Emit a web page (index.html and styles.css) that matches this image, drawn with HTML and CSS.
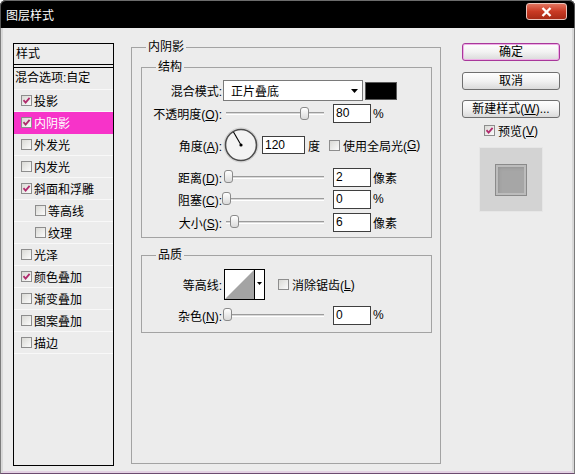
FILE: index.html
```html
<!DOCTYPE html>
<html lang="zh-CN">
<head>
<meta charset="utf-8">
<title>图层样式</title>
<link rel="stylesheet" href="styles.css">
</head>
<body>
<div class="window">
  <div class="titlebar">
    <span class="title">图层样式</span>
    <span class="close"><svg width="11" height="10" viewBox="0 0 11 10"><path d="M1.5 1 L9.5 9 M9.5 1 L1.5 9" stroke="#fff" stroke-width="2.4"/></svg></span>
  </div>
  <div class="client">
    <div class="stylelist">
      <div class="list-head">样式</div>
      <div class="list-blend">混合选项:自定</div>
      <div class="item"><span class="cb"><svg viewBox="0 0 9 9"><path d="M1.5 4.2 L3.6 6.6 L7.6 1.8"/></svg></span>投影</div>
      <div class="item sel"><span class="cb"><svg viewBox="0 0 9 9"><path d="M1.5 4.2 L3.6 6.6 L7.6 1.8"/></svg></span>内阴影</div>
      <div class="item"><span class="cb"></span>外发光</div>
      <div class="item"><span class="cb"></span>内发光</div>
      <div class="item"><span class="cb"><svg viewBox="0 0 9 9"><path d="M1.5 4.2 L3.6 6.6 L7.6 1.8"/></svg></span>斜面和浮雕</div>
      <div class="item sub"><span class="cb"></span>等高线</div>
      <div class="item sub"><span class="cb"></span>纹理</div>
      <div class="item"><span class="cb"></span>光泽</div>
      <div class="item"><span class="cb"><svg viewBox="0 0 9 9"><path d="M1.5 4.2 L3.6 6.6 L7.6 1.8"/></svg></span>颜色叠加</div>
      <div class="item"><span class="cb"></span>渐变叠加</div>
      <div class="item"><span class="cb"></span>图案叠加</div>
      <div class="item"><span class="cb"></span>描边</div>
    </div>

    <fieldset class="group outer">
      <legend>内阴影</legend>
      <div class="outer-body">
        <fieldset class="group inner struct">
          <legend>结构</legend>
          <div class="row r-blend">
            <span class="lbl">混合模式:</span>
            <div class="select"><span>正片叠底</span><svg width="7" height="4" viewBox="0 0 7 4"><path d="M0 0H7L3.5 4Z"/></svg></div>
            <span class="swatch"></span>
          </div>
          <div class="row r-opacity">
            <span class="lbl">不透明度(<u>O</u>):</span>
            <div class="slider"><span class="track"></span><span class="thumb" style="left:78px"></span></div>
            <span class="num">80</span><span class="unit">%</span>
          </div>
          <div class="row r-angle">
            <span class="lbl">角度(<u>A</u>):</span>
            <svg class="dial" width="36" height="36" viewBox="0 0 36 36">
              <circle cx="18" cy="18" r="17" fill="none" stroke="#cfcfcf" stroke-width="1"/>
              <circle cx="18" cy="18" r="15.5" fill="#f3f3f3" stroke="#4d4d4d" stroke-width="1.6"/>
              <line x1="18" y1="18" x2="10.5" y2="5" stroke="#000" stroke-width="1.1"/>
              <circle cx="18" cy="18" r="1.6" fill="#000"/>
            </svg>
            <span class="num wide">120</span><span class="unit deg">度</span>
            <span class="check global"><span class="cb"></span>使用全局光(<u>G</u>)</span>
          </div>
          <div class="row r-dist">
            <span class="lbl">距离(<u>D</u>):</span>
            <div class="slider"><span class="track"></span><span class="thumb" style="left:2px"></span></div>
            <span class="num">2</span><span class="unit">像素</span>
          </div>
          <div class="row r-choke">
            <span class="lbl">阻塞(<u>C</u>):</span>
            <div class="slider"><span class="track"></span><span class="thumb" style="left:0px"></span></div>
            <span class="num">0</span><span class="unit">%</span>
          </div>
          <div class="row r-size">
            <span class="lbl">大小(<u>S</u>):</span>
            <div class="slider"><span class="track"></span><span class="thumb" style="left:8px"></span></div>
            <span class="num">6</span><span class="unit">像素</span>
          </div>
        </fieldset>

        <fieldset class="group inner quality">
          <legend>品质</legend>
          <div class="row r-contour">
            <span class="lbl">等高线:</span>
            <div class="contour">
              <svg class="curve" width="29" height="29" viewBox="0 0 29 29"><rect width="29" height="29" fill="#fff"/><path d="M0 29 L29 0 L29 29 Z" fill="#a4a4a4"/></svg>
              <span class="carrow"><svg width="5" height="3" viewBox="0 0 5 3"><path d="M0 0H5L2.5 3Z"/></svg></span>
            </div>
            <span class="check anti"><span class="cb"></span>消除锯齿(<u>L</u>)</span>
          </div>
          <div class="row r-noise">
            <span class="lbl">杂色(<u>N</u>):</span>
            <div class="slider"><span class="track"></span><span class="thumb" style="left:1px"></span></div>
            <span class="num">0</span><span class="unit">%</span>
          </div>
        </fieldset>
      </div>
    </fieldset>

    <div class="side">
      <div class="btn default">确定</div>
      <div class="btn cancel">取消</div>
      <div class="btn newstyle">新建样式(<u>W</u>)...</div>
      <div class="preview-row"><span class="cb"><svg viewBox="0 0 9 9"><path d="M1.5 4.2 L3.6 6.6 L7.6 1.8"/></svg></span>预览(<u>V</u>)</div>
      <div class="preview"><span class="pv-square"></span></div>
    </div>
  </div>
</div>
</body>
</html>
```
FILE: styles.css
```css
html, body {
  margin: 0;
  padding: 0;
  background: #ffffff;
}

body {
  font-family: "Liberation Sans", "Noto Sans CJK SC", sans-serif;
  font-size: 12px;
  color: #000;
}

.window {
  width: 575px;
  height: 474px;
  display: flex;
  flex-direction: column;
}

/* title bar */
.titlebar {
  height: 28px;
  flex: none;
  display: flex;
  align-items: flex-start;
  background: #000;
  border-radius: 6px 6px 0 0;
  box-shadow: inset 0 1px #6c6c6c, inset 1px 0 #555, inset -1px 0 #555;
  color: #fff;
}

.title {
  padding: 8px 0 0 6px;
  line-height: 16px;
  font-size: 12px;
}

.close {
  margin: 3px 8px 0 auto;
  width: 41px;
  height: 17px;
  box-sizing: border-box;
  border: 1px solid #e9c3bb;
  border-radius: 3px;
  background: linear-gradient(#e2735e, #c93a24 50%, #a82a16);
  display: flex;
  align-items: center;
  justify-content: center;
}

/* client area */
.client {
  flex: 1;
  display: flex;
  background: #ececec;
  border: 1px solid #7c7c7c;
  border-top: 0;
  border-bottom-color: #6c4c70;
  box-shadow: inset 2px 0 #d8d8d8, inset -2px 0 #d8d8d8, inset 0 -2px #e4d2e4;
  padding: 12px 0 7px 12px;
}

/* style list */
.stylelist {
  width: 101px;
  margin-top: 3px;
  box-sizing: border-box;
  border: 1px solid #000;
  flex: none;
}

.list-head {
  height: 20px;
  line-height: 20px;
  padding-left: 2px;
  border-bottom: 1px solid #000;
}

.list-blend {
  margin-top: 2px;
  border-top: 1px solid #000;
  height: 21px;
  line-height: 21px;
  padding-left: 1px;
  border-bottom: 1px solid #f8f8f8;
}

.item {
  height: 21px;
  display: flex;
  align-items: center;
  padding-left: 7px;
  border-bottom: 1px solid #f8f8f8;
  white-space: nowrap;
}

.item.sub {
  padding-left: 21px;
}

.item.sel {
  background: #f733c9;
  border-bottom-color: #f733c9;
  color: #fff;
}

.item .cb {
  margin-right: 2px;
}

/* checkbox */
.cb {
  width: 11px;
  height: 11px;
  box-sizing: border-box;
  border: 1px solid #8d8d8d;
  background: linear-gradient(135deg, #d9d9d5, #fbfbfb);
  display: inline-flex;
  align-items: center;
  justify-content: center;
  flex: none;
}

.cb svg {
  width: 9px;
  height: 9px;
}

.cb svg path {
  fill: none;
  stroke: #b02a6c;
  stroke-width: 1.8;
}

/* group boxes */
.group {
  margin: 0;
  padding: 0;
  border: 1px solid #a3a3a3;
  min-width: 0;
  box-sizing: border-box;
}

.group > legend {
  margin-left: 14px;
  padding: 0 2px;
  line-height: 14px;
  font-size: 12px;
}

.group.outer {
  width: 310px;
  margin: 0 0 2px 17px;
  flex: none;
}

.outer-body {
  padding: 6px 8px 0 9px;
}

.group.inner {
  width: 291px;
}

.struct {
  padding-bottom: 4px;
}

.quality {
  margin-top: 10px;
  padding-bottom: 6px;
}

/* rows */
.row {
  display: flex;
  align-items: center;
  white-space: nowrap;
}

.lbl {
  width: 80px;
  flex: none;
  text-align: right;
}

.r-blend { margin-top: 6px; height: 21px; }
.r-opacity { margin-top: 2px; height: 21px; }
.r-angle { margin-top: 3px; height: 36px; }
.r-dist { margin-top: 3px; height: 22px; }
.r-choke { height: 22px; }
.r-size { margin-top: 1px; height: 22px; }
.r-contour { margin-top: 7px; height: 31px; }
.r-noise { margin-top: 4px; height: 22px; }

/* select */
.select {
  margin-left: 1px;
  width: 140px;
  height: 21px;
  box-sizing: border-box;
  border: 1px solid #7a7a7a;
  background: #fff;
  display: flex;
  align-items: center;
  padding: 0 4px 0 7px;
}

.select span {
  flex: 1;
}

.swatch {
  margin-left: 2px;
  width: 32px;
  height: 18px;
  box-sizing: border-box;
  background: #000;
  border: 1px solid #5a5a5a;
}

/* slider */
.slider {
  position: relative;
  width: 111px;
  height: 14px;
  flex: none;
  display: flex;
  align-items: center;
  padding-left: 4px;
  box-sizing: border-box;
}

.track {
  width: 98px;
  height: 3px;
  box-sizing: border-box;
  border-top: 1px solid #9c9c9c;
  border-bottom: 1px solid #ffffff;
  background: #d9d9d9;
}

.thumb {
  position: absolute;
  top: 0;
  width: 9px;
  height: 13px;
  box-sizing: border-box;
  border: 1px solid #8a8a8a;
  border-radius: 3px;
  background: linear-gradient(#ffffff, #dadada);
}

/* number fields */
.num {
  width: 38px;
  height: 19px;
  box-sizing: border-box;
  border: 1px solid #3f3f3f;
  background: #fff;
  padding-left: 2px;
  line-height: 17px;
  flex: none;
}

.num.wide {
  width: 43px;
  height: 18px;
  line-height: 16px;
  margin-left: 3px;
}

.unit {
  margin-left: 2px;
}

.unit.deg {
  margin-left: 3px;
}

.dial {
  margin-left: 1px;
  flex: none;
}

.check {
  display: flex;
  align-items: center;
}

.check .cb {
  margin-right: 3px;
}

.check.global {
  margin-left: 9px;
}

.check.anti {
  margin-left: 13px;
}

/* contour picker */
.contour {
  margin-left: 2px;
  width: 41px;
  height: 31px;
  box-sizing: border-box;
  border: 1px solid #000;
  display: flex;
  background: #fff;
}

.curve {
  display: block;
}

.carrow {
  flex: 1;
  border-left: 1px solid #000;
  display: flex;
  align-items: center;
  justify-content: center;
  padding-bottom: 3px;
}

/* right column */
.side {
  width: 98px;
  margin-left: 21px;
  display: flex;
  flex-direction: column;
  flex: none;
}

.btn {
  height: 18px;
  box-sizing: border-box;
  border: 1px solid #6f6f6f;
  border-radius: 3px;
  background: linear-gradient(#fefefe, #f2f2f2 50%, #dadada);
  line-height: 16px;
  text-align: center;
  white-space: nowrap;
}

.btn.default {
  margin-top: 3px;
  border-color: #a8379a;
  box-shadow: inset 0 0 0 1px #eeaee6;
}

.btn.cancel {
  margin-top: 11px;
}

.btn.newstyle {
  margin-top: 10px;
}

.preview-row {
  margin-top: 5px;
  height: 15px;
  display: flex;
  align-items: center;
  justify-content: center;
}

.preview-row .cb {
  margin-right: 3px;
}

.preview {
  margin-top: 9px;
  align-self: center;
  width: 64px;
  height: 65px;
  box-sizing: border-box;
  border: 1px solid #e6e6e6;
  background: #d3d3d3;
  display: flex;
  align-items: center;
  justify-content: center;
}

.pv-square {
  width: 32px;
  height: 32px;
  box-sizing: border-box;
  border: 1px solid #8a8a8a;
  background: #a6a6a6;
  box-shadow: inset 0 0 0 2px #bcbcbc, inset 2px 2px 4px #8c8c8c;
}
```
